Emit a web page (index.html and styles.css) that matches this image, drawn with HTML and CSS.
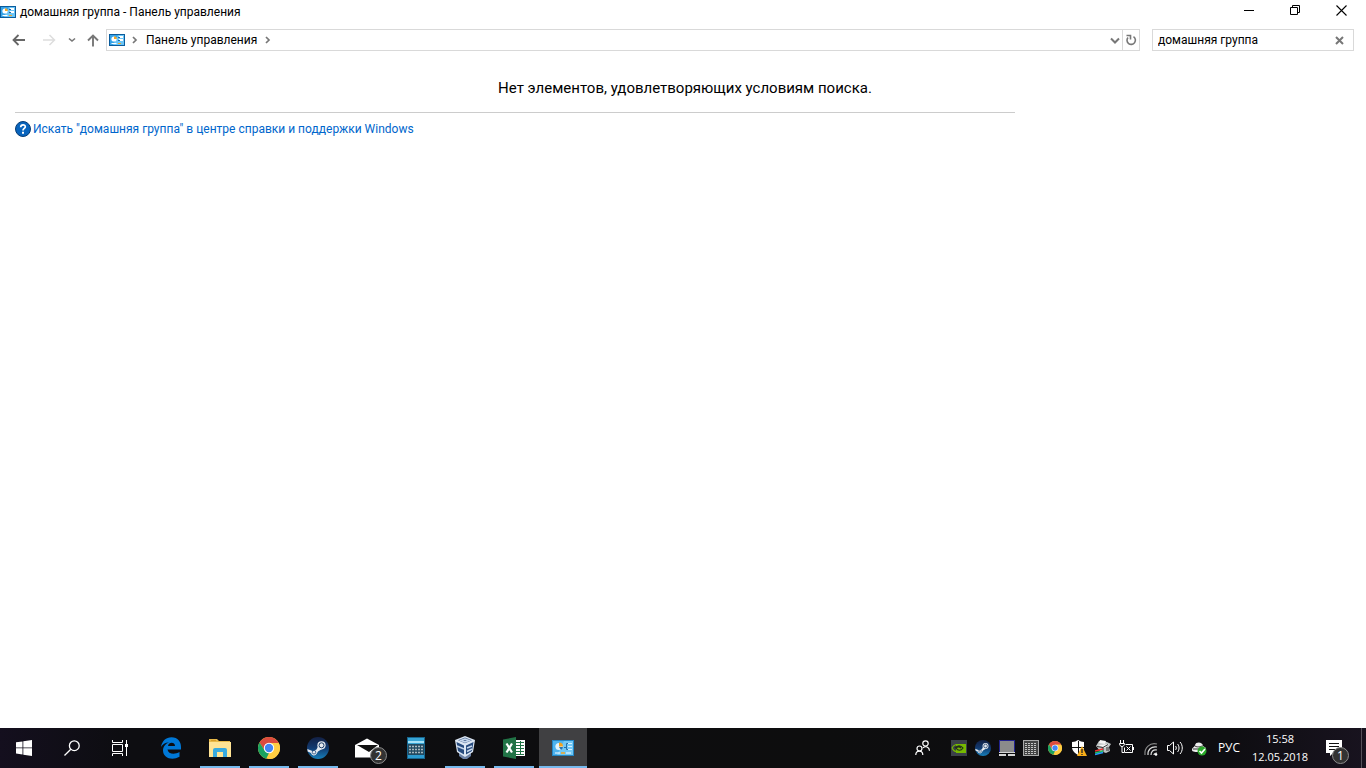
FILE: index.html
```html
<!DOCTYPE html>
<html lang="ru">
<head>
<meta charset="utf-8">
<title>домашняя группа - Панель управления</title>
<link rel="stylesheet" href="styles.css">
</head>
<body>
<svg class="defs" aria-hidden="true">
  <symbol id="panel" viewBox="0 0 16 14">
    <path fill="#0b5c9c" d="M0 1h16v12H0z"/><path fill="#6cc5f6" d="M1 2h14v10H1z"/>
    <path fill="#35a3e8" d="M1 2h8l-5 10H1z"/>
    <circle cx="5" cy="6" r="2.6" fill="#fff"/><path fill="#f5a623" d="M5 6V3.2A2.8 2.8 0 0 1 7.8 6z"/>
    <path fill="#fff" d="M10 3h4v2h-4zM10 6h4v2h-4zM2.500 10h5v1h-5z"/><path fill="#1767ad" d="M9 4h2v1H9zM9 7h2v1H9z"/><path fill="#f5a623" d="M9 10h3v1H9z"/>
  </symbol>
  <symbol id="chrome" viewBox="0 0 22 22">
    <circle cx="11" cy="11" r="11" fill="#ffcd42"/>
    <path fill="#dc4b3e" d="M1.500 5.500A11 11 0 0 1 20.500 5.500L20.700 6H11L6.700 13.500z"/>
    <path fill="#1aa260" d="M1.500 5.500L6.700 13.500L11 16L8.200 21.700A11 11 0 0 1 1.500 5.500z"/>
    <path fill="#ffcd42" d="M20.700 6A11 11 0 0 1 10 22L15.300 13.500L15.300 8.500L11 6z"/>
    <circle cx="11" cy="11" r="5.200" fill="#fff"/><circle cx="11" cy="11" r="4.200" fill="#4285f4"/>
  </symbol>
  <symbol id="steam" viewBox="0 0 22 22">
    <linearGradient id="sg" x2="0" y2="1"><stop offset="0" stop-color="#132044"/><stop offset=".5" stop-color="#123a70"/><stop offset="1" stop-color="#167fba"/></linearGradient>
    <circle cx="11" cy="11" r="11" fill="url(#sg)"/>
    <path fill="#e6eaf0" d="M.300 12L6 14.300L9.500 12.600L11.500 8.500L15 12L11 14.500L9.500 17A3 3 0 0 1 4 16L.700 14.500z"/>
    <circle cx="14.500" cy="8.300" r="4.100" fill="#e6eaf0"/><circle cx="14.500" cy="8.300" r="2.500" fill="none" stroke="#173966"/>
    <circle cx="7" cy="15.200" r="1.800" fill="none" stroke="#214b7c" stroke-width=".8"/>
  </symbol>
</svg>

<div class="window">
  <header class="titlebar">
    <svg class="cp" viewBox="0 0 16 14"><use href="#panel"/></svg>
    <h1 class="title">домашняя группа - Панель управления</h1>
    <div class="caption">
      <button aria-label="Свернуть"><svg width="11" height="11"><path d="M0 5.500h10" stroke="#000"/></svg></button>
      <button aria-label="Восстановить"><svg width="11" height="11" fill="none" stroke="#000"><path d="M.500 2.500h7v7h-7zM2.500 2.500v-2h7v7h-2"/></svg></button>
      <button aria-label="Закрыть"><svg width="11" height="11" stroke="#000" stroke-width="1.100"><path d="M.500 .500l10 10M10.500 .500l-10 10"/></svg></button>
    </div>
  </header>

  <nav class="navbar">
    <button class="arrow" aria-label="Назад"><svg width="14" height="12" fill="none" stroke="#666" stroke-width="1.800"><path d="M13 6H1.500M6.500 1L1.500 6l5 5"/></svg></button>
    <button class="arrow forward" aria-label="Вперёд" disabled><svg width="14" height="12" fill="none" stroke="#ddd" stroke-width="1.500"><path d="M1 6h11.500M7.500 1l5 5l-5 5"/></svg></button>
    <button class="recent" aria-label="Последние расположения"><svg width="8" height="6" fill="none" stroke="#777" stroke-width="1.600"><path d="M1 1.500l3 2.500l3-2.500"/></svg></button>
    <button class="up" aria-label="Вверх"><svg width="12" height="13" fill="none" stroke="#777" stroke-width="1.900"><path d="M6 12.500V2M1 6.500L6 1.500l5 5"/></svg></button>
    <div class="address">
      <svg class="cp" viewBox="0 0 16 14"><use href="#panel"/></svg>
      <svg class="crumb-sep" width="6" height="8" fill="none" stroke="#777" stroke-width="1.700"><path d="M1 1l3 3l-3 3"/></svg>
      <a class="crumb" href="#">Панель управления</a>
      <svg class="crumb-sep" width="6" height="8" fill="none" stroke="#777" stroke-width="1.700"><path d="M1 1l3 3l-3 3"/></svg>
      <button class="history" aria-label="Предыдущие расположения"><svg width="10" height="7" fill="none" stroke="#777" stroke-width="2"><path d="M1 1.500l4 4l4-4"/></svg></button>
      <button class="refresh" aria-label="Обновить"><svg width="12" height="12" fill="none" stroke="#777" stroke-width="1.600"><path d="M8.500 2.700A4.200 4.200 0 1 1 3 3.500M1.500 1.500h4v4"/></svg></button>
    </div>
    <form class="search">
      <input type="text" value="домашняя группа" aria-label="Поиск">
      <button type="button" aria-label="Очистить"><svg width="9" height="9" stroke="#777" stroke-width="2"><path d="M1 1l7 7M8 1l-7 7"/></svg></button>
    </form>
  </nav>

  <main class="content">
    <div class="results">
      <p class="message">Нет элементов, удовлетворяющих условиям поиска.</p>
      <a class="help" href="#">
        <svg width="16" height="16"><circle cx="8" cy="8" r="7.500" fill="#0864bd" stroke="#073c74"/><path d="M5.700 6.300C5.700 3 10.500 3.200 10.300 5.900C10.200 7.400 8 7.500 8 9.400" fill="none" stroke="#fff" stroke-width="1.700"/><path fill="#fff" d="M7 10.700h2v2H7z"/></svg>
        <span>Искать "домашняя группа" в центре справки и поддержки Windows</span>
      </a>
    </div>
  </main>

  <footer class="taskbar">
    <div class="system">
      <button aria-label="Пуск"><svg width="16" height="16" fill="#fff"><path d="M0 2.300l6.500-.9v6.100H0zM7.300 1.300L16 0v7.500H7.300zM0 8.300h6.500v6.200L0 13.600zM7.300 8.300H16V16l-8.700-1.300z"/></svg></button>
      <button aria-label="Поиск"><svg width="16" height="16" fill="none" stroke="#fff" stroke-width="1.300"><circle cx="10.300" cy="5.700" r="4.900"/><path d="M6.800 9.200L.500 15.500"/></svg></button>
      <button aria-label="Представление задач"><svg width="17" height="16" fill="none" stroke="#fff"><path d="M.500 0v2.500h10V0M.500 16v-2.500h10V16M.500 4.500h10v7H.500zM14.500 0v16"/><path fill="#fff" stroke="none" d="M13 4h3v3h-3z"/></svg></button>
    </div>
    <div class="apps">
      <button aria-label="Edge"><svg width="22" height="22" viewBox="0 0 22 22"><path fill="#0078d7" d="M1 10C2 4 6 .300 11.500 .300C18 .300 21 5 21 10v2.500H7.500C8 17 14.500 18 19.500 15v4.800C12 24 3 21 3 13.500C3 9.500 5.700 6.500 9 5.500C5 5.500 2.500 7.500 1 10zM8 9h7C15 4.700 8.700 4.500 8 9z"/></svg></button>
      <button class="open" aria-label="Проводник"><svg width="22" height="20"><path fill="#e8b949" d="M0 1h8l2 2h11v5H0z"/><path fill="#ffe394" d="M0 4h22v15H0z"/><path fill="#d89d27" d="M2 2h5v1H2z"/><path fill="#37a9df" d="M4 19v-7a2 2 0 0 1 2-2h10a2 2 0 0 1 2 2v7h-4v-5H8v5z"/></svg></button>
      <button class="open" aria-label="Chrome"><svg width="22" height="22"><use href="#chrome"/></svg></button>
      <button class="open" aria-label="Steam"><svg width="22" height="22"><use href="#steam"/></svg></button>
      <button aria-label="Почта"><svg width="24" height="20"><path fill="#fff" d="M0 7L12 .500L24 7v12.500H0z"/><path fill="#111" d="M2 7h21l-9 7z"/></svg><span class="badge">2</span></button>
      <button aria-label="Калькулятор"><svg width="18" height="22"><path fill="#17658e" d="M0 0h18v22H0z"/><path fill="#37a4d4" d="M1 1h16v6H1z"/><path fill="#a6e2f7" d="M1 4h16v2H1z"/><path fill="#234b62" d="M1 7h16v11H1z"/><path stroke="#a8b8bf" stroke-width="1.600" stroke-dasharray="2 1" d="M2 9.500h15M2 12.500h15M2 15.500h15"/><path fill="#2c9bd0" d="M1 18h16v3H1z"/></svg></button>
      <button class="open" aria-label="VirtualBox"><svg width="22" height="24"><path fill="#6d83a7" d="M5 16h12v4l-4 3H9l-4-3z"/><path fill="#dce6f3" d="M11 0l10 4l-2 12l-8 5l-8-5L1 4z"/><path fill="#4d6a94" d="M11 1.500l7 2.800l-7 3l-7-3z"/><path fill="#274b7e" d="M2.500 6l7.500 3.500v9L4 15zM19.500 6L12 9.500v9l6-3.500z"/><path fill="none" stroke="#c7d7ec" stroke-width="1.500" d="M3 10l7 3M13 12l5-2M13 15.500l5-2.500M7 4.500l4-1.500l4 1.500l-4 1.500z"/></svg></button>
      <button class="open" aria-label="Excel"><svg width="22" height="22"><path fill="#fff" d="M12 3h10v16H12z"/><path fill="#217346" d="M0 2.500L13 0v22L0 19.500z"/><path stroke="#217346" stroke-width="1" d="M13 5.500h8M13 8.500h8M13 11.500h8M13 14.500h8M13 17.500h8M17.500 4v14"/><path fill="none" stroke="#fff" stroke-width="2.200" d="M3.500 6.500l5.500 9M9 6.500l-5.500 9"/></svg></button>
      <button class="open active" aria-label="Панель управления"><svg width="22" height="16" viewBox="0 1 22 16"><path fill="#2386c4" d="M0 1h22v16H0z"/><path fill="#72c8f5" d="M1 2h20v14H1z"/><path fill="#4eb3ee" d="M1 2h11L5 16H1z"/><circle cx="7" cy="7.500" r="3.600" fill="#e3f4fd"/><path fill="#f2a21e" d="M7 7.500V3.500a4 4 0 0 1 4 4z"/><path fill="#2375b4" d="M7 8h4a4 4 0 0 1-2 3z"/><path fill="none" stroke="#d6f0fe" d="M16 4.500h4M16 7.500h4M16 10.500h4"/><path fill="none" stroke="#266fa9" d="M12 8.500h2.500v-4H16M14.500 7.500v3H16"/><path stroke="#f5a623" stroke-width="1.500" d="M9 14h4"/><path stroke="#fff" d="M3 14h5M14 14h5"/></svg></button>
    </div>
    <div class="tray">
      <button class="people" aria-label="Люди"><svg width="16" height="16" fill="none" stroke="#fff" stroke-width="1.200"><circle cx="10.500" cy="3.500" r="2.700"/><circle cx="4.500" cy="8.500" r="2.500"/><path d="M.800 15c0-5.200 7-5.200 7 0M8 7.800c2.500-2 6.300-1 6.500 3"/></svg></button>
      <button aria-label="NVIDIA"><svg width="16" height="16"><path fill="#3b4148" d="M0 0h16v16H0z"/><path fill="#76b900" d="M5 4h10v9H5z"/><path fill="none" stroke="#76b900" stroke-width="1.200" d="M1 8c2-4 5-4 7-2M1 8c2 4 5 4 7 3"/><path fill="none" stroke="#222e19" stroke-width="1.200" d="M4 8c2-3 6-3 8 0c-2 3-5 3-7 0c2-2 4-1 5 0"/></svg></button>
      <button aria-label="Steam"><svg width="16" height="16"><use href="#steam"/></svg></button>
      <button aria-label="Экран"><svg width="16" height="16"><path fill="#22228c" d="M0 0h16v13H0z"/><path fill="#8b8b8b" d="M1 1h14v11H1z"/><path fill="#d5d5d5" d="M0 12h16v1H0zM0 14h7v2H0zM9 14h7v2H9z"/></svg></button>
      <button aria-label="Монитор ресурсов"><svg width="16" height="16"><path fill="#aaa" d="M0 0h16v16H0z"/><path fill="#444" d="M1 1h14v14H1z"/><path stroke="#c4c4c4" stroke-dasharray="2 1" d="M2 3.500h12M2 5.500h12M2 7.500h12M2 9.500h12M2 11.500h12M2 13.500h12"/></svg></button>
      <button aria-label="Chrome"><svg width="14" height="14"><use href="#chrome"/></svg></button>
      <button aria-label="Защитник Windows"><svg width="16" height="16"><path fill="#fff" d="M1 2c3 0 4-1 6-2c2 1 4 2 6 2v5c0 4-3 6-6 8c-3-2-6-4-6-8z"/><path stroke="#111" d="M7.500 1v13M1 7.500h12"/><path fill="#f9ae19" d="M11 6l5 10H6z"/><path stroke="#222" stroke-width="1.300" d="M11 9v4M11 14v1"/></svg></button>
      <button aria-label="Принтер"><svg width="16" height="16"><path fill="#bfc4c4" d="M4 1l8 1l4 2l-2 3l1 4l-4 2l-6-2L1 6z"/><path fill="#f5f5f5" d="M5 0l6 1l-1 3l-6-1zM3 5l11-1l-4 4z"/><path fill="none" stroke="#333" d="M2 6.500l6 1l5-3M8 8v4M11 8h3M11 10h3"/><path stroke="#f03232" stroke-width="1.500" d="M0 11l8-2"/><path stroke="#24c463" stroke-width="1.500" d="M0 13l8-2"/><path stroke="#269cff" stroke-width="1.500" d="M0 14.500l8-2"/></svg></button>
      <button aria-label="Батарея"><svg width="16" height="16" fill="none" stroke="#fff"><path d="M1.500 0v3M4.500 0v3M.500 3.500h5c0 4-5 4-5 0zM3 6v6.500h2M6.500 4.500h7v8h-8v-5M14.500 7v3M7.500 6.500l4 4M11.500 6.500l-4 4"/></svg></button>
      <button aria-label="Wi-Fi"><svg width="16" height="16" fill="none" stroke-width="1.200"><path stroke="#888" d="M2 15C1 8 7 2 14 4"/><path stroke="#ddd" d="M5 15c-.500-5 3-9 9-8M8 15c0-3 2-6 6-5M11 15c0-1 1-2 3-2"/><circle cx="13" cy="14.500" r="1.300" fill="#fff"/></svg></button>
      <button aria-label="Громкость"><svg width="18" height="16" fill="none" stroke="#fff"><path d="M1.500 5.500h2l4-3.500v12l-4-3.500h-2zM9.500 6c1 1 1 3 0 4M11.500 4c2 2 2 6 0 8M14 2c3 3 3 9 0 12"/></svg></button>
      <button aria-label="Безопасное извлечение"><svg width="16" height="16"><path fill="#eee" d="M1 10c0-3 3-3 3-5c1-4 8-3 8 1l3 2c0 3-3 4-6 4c-4 0-8 0-8-2z"/><path fill="none" stroke="#333" d="M4 6c3 2 6 0 8 0M2 9h6"/><circle cx="11" cy="11" r="4.500" fill="#28a828"/><path fill="none" stroke="#fff" stroke-width="1.700" d="M8.500 11l2 2l3.500-4"/></svg></button>
      <button class="language">РУС</button>
      <button class="clock"><time>15:58</time><time>12.05.2018</time></button>
      <button class="notices" aria-label="Уведомления"><svg width="16" height="16"><path fill="#fff" d="M0 0h16v13H7l-3 3v-3H0z"/><path stroke="#111" d="M3 3.500h10M3 6.500h10M3 9.500h7"/></svg><span class="badge">1</span></button>
      <button class="desktop" aria-label="Показать рабочий стол"></button>
    </div>
  </footer>
</div>
</body>
</html>
```
FILE: styles.css
```css
* { box-sizing: border-box; }
body { margin: 0; background: #fff; color: #000; font: 12px/16px Roboto, "Noto Sans", sans-serif; }
button { display: flex; align-items: center; justify-content: center; margin: 0; padding: 0; border: 0; background: none; color: inherit; font: inherit; }
svg { display: block; flex: none; }
a { text-decoration: none; }
.defs { position: absolute; width: 0; height: 0; }
.window { display: flex; flex-direction: column; min-height: 100vh; }
.cp { width: 16px; height: 14px; }

.titlebar { display: flex; align-items: center; height: 23px; }
.title { flex: 1; margin: 0 0 0 4px; font: inherit; }
.caption { display: flex; align-self: stretch; margin-right: 2px; }
.caption button { width: 46px; padding-bottom: 2px; }

.navbar { display: flex; align-items: center; height: 34px; padding: 0 12px; }
.arrow { width: 14px; height: 22px; margin-right: 16px; }
.forward { margin-right: 6px; }
.recent { width: 20px; height: 22px; }
.up { width: 22px; height: 22px; margin-right: 2px; }
.address { display: flex; flex: 1; align-items: center; height: 22px; padding-left: 2px; border: 1px solid #d9d9d9; }
.crumb-sep { margin: 0 7px; }
.crumb { padding: 0 1px; color: #000; }
.history { width: 14px; margin-left: auto; }
.refresh { width: 17px; height: 20px; border-left: 1px solid #d9d9d9; }
.search { display: flex; width: 202px; height: 22px; margin-left: 12px; border: 1px solid #d9d9d9; }
.search input { flex: 1; min-width: 0; padding: 0 0 0 5px; border: 0; outline: 0; background: none; color: #000; font: inherit; }
.search button { width: 28px; }

.content { flex: 1; padding: 19px 15px; }
.results { max-width: 1000px; }
.message { margin: 0; padding: 0 0 12px 340px; border-bottom: 1px solid #ccc; font-size: 15px; line-height: 24px; text-align: center; }
.help { display: inline-flex; align-items: center; gap: 2px; margin-top: 8px; color: #0066cc; }

.taskbar { display: flex; height: 40px; background: linear-gradient(90deg, #140f1e 0, #0d0d11 120px, #0d0d0e 60%, #0e0d11 90%, #18131f 100%); color: #fff; font-family: "Open Sans", sans-serif; }
.system, .apps, .tray { display: flex; }
.system button, .apps button { position: relative; width: 48px; }
.apps { gap: 1px; margin-left: 3px; }
.open::after { content: ""; position: absolute; right: 4px; bottom: 0; left: 4px; height: 2px; background: #76b9ed; }
.active { background: #404042; }
.active::after { right: 0; left: 0; }
.badge { position: absolute; right: 4px; bottom: 4px; width: 17px; height: 17px; border: 1px solid #8c8c8c; border-radius: 50%; background: #333; font-size: 12px; line-height: 15px; text-align: center; }
.tray { margin-left: auto; }
.tray button { width: 24px; }
.tray .people { width: 48px; padding-right: 24px; margin-right: -12px; }
.tray .language { width: 40px; margin-left: -2px; }
.tray .clock { width: 62px; flex-direction: column; font-size: 11px; line-height: 18px; }
.tray .notices { position: relative; width: 46px; margin-right: 4px; }
.notices .badge { right: 8px; }
.tray .desktop { width: 5px; border-left: 1px solid #55515a; }
```
